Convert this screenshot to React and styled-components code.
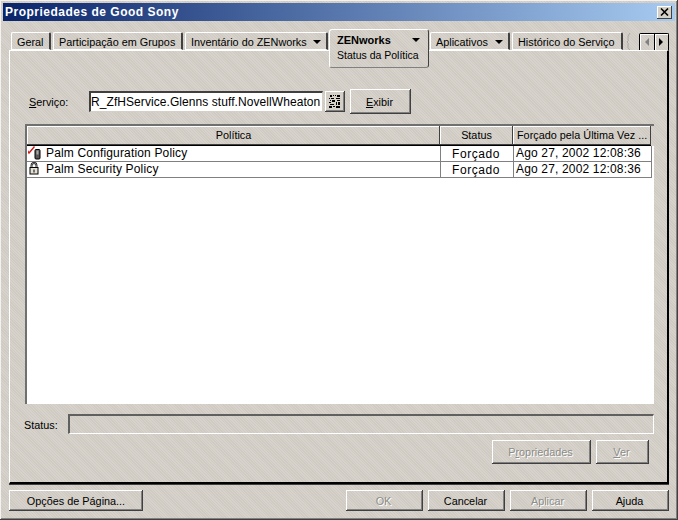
import React from "react";
import styled, { createGlobalStyle } from "styled-components";

const face = "#d4d0c8";
const dither = `
  repeating-linear-gradient(45deg, rgba(255,255,255,.07) 0 1px, rgba(0,0,0,.025) 1px 2px)
`;

const GlobalStyle = createGlobalStyle`
  html, body {
    margin: 0;
    padding: 0;
    background: ${face};
  }
  body {
    width: 678px;
    height: 520px;
    overflow: hidden;
    font-family: "Liberation Sans", Arial, sans-serif;
    font-size: 10.85px;
    color: #000;
  }
  u {
    text-underline-offset: 1px;
  }
`;

const Window = styled.div`
  box-sizing: border-box;
  width: 678px;
  height: 520px;
  padding: 3px;
  display: flex;
  flex-direction: column;
  background-color: ${face};
  background-image: ${dither};
  box-shadow: inset -1px -1px 0 #404040, inset 1px 1px 0 #f4f2ee,
    inset -2px -2px 0 #808080;
`;

const TitleBar = styled.div`
  height: 18px;
  flex: none;
  display: flex;
  align-items: center;
  justify-content: space-between;
  padding: 0 3px 0 2px;
  background: linear-gradient(90deg, #0a246a, #a6caf0);
  color: #fff;
  font-weight: bold;
  font-size: 12px;
  letter-spacing: 0.5px;
`;

const CloseButton = styled.div`
  box-sizing: border-box;
  width: 15px;
  height: 13px;
  display: flex;
  align-items: center;
  justify-content: center;
  background: ${face};
  box-shadow: inset -1px -1px 0 #404040, inset 1px 1px 0 #fff;
`;

const TabStrip = styled.div`
  height: 21px;
  margin-top: 8px;
  padding: 0 6px 0 8px;
  display: flex;
  align-items: flex-end;
  flex: none;
  position: relative;
  z-index: 2;
`;

const Tab = styled.div`
  box-sizing: border-box;
  height: 18px;
  width: ${(p) => p.$w}px;
  margin-right: ${(p) => p.$gap ?? 2}px;
  padding: 1px 0 0 5px;
  display: flex;
  align-items: center;
  justify-content: space-between;
  white-space: nowrap;
  border-top: 1px solid #fff;
  border-left: 1px solid #fff;
  border-right: 2px solid #404040;
  border-radius: 2px 2px 0 0;
  border-bottom: 1px solid #fff;
`;

const ActiveTab = styled.div`
  box-sizing: border-box;
  width: 100px;
  height: 39px;
  margin-bottom: -18px;
  margin-right: 1px;
  align-self: flex-end;
  padding: 3px 4px 0 7px;
  display: flex;
  flex-direction: column;
  gap: 2px;
  background-color: ${face};
  background-image: ${dither};
  border: 1px solid #fff;
  border-right-color: #404040;
  border-bottom-color: #808080;
  border-radius: 3px;
  position: relative;
`;

const ActiveHead = styled.div`
  display: flex;
  align-items: center;
  justify-content: space-between;
  padding-right: 4px;
  font-weight: bold;
  font-size: 11px;
  height: 14px;
`;

const ActiveItem = styled.span`
  font-size: 10.5px;
  white-space: nowrap;
`;

const Caret = styled.span`
  width: 0;
  height: 0;
  margin-right: ${(p) => p.$mr ?? 5}px;
  border-left: 4px solid transparent;
  border-right: 4px solid transparent;
  border-top: 4px solid #000;
`;

const TabStub = styled.svg`
  width: 9px;
  height: 17px;
  margin: 0 5px 0 1px;
  flex: none;
`;

const Scroller = styled.div`
  box-sizing: border-box;
  width: 30px;
  height: 17px;
  display: flex;
  border: 1px solid #000;
  border-bottom: none;
  border-radius: 2px 2px 0 0;
`;

const ScrollButton = styled.div`
  flex: 1;
  display: flex;
  align-items: center;
  justify-content: center;
  box-shadow: inset 1px 1px 0 #fff;
  & + & {
    border-left: 1px solid #000;
  }
  i {
    width: 0;
    height: 0;
    border-top: 4px solid transparent;
    border-bottom: 4px solid transparent;
    ${(p) =>
      p.$dir === "left"
        ? `border-right: 4px solid ${p.$off ? "#808080" : "#000"};`
        : `border-left: 4px solid ${p.$off ? "#808080" : "#000"};`}
  }
`;

const Panel = styled.div`
  flex: 1;
  margin: 0 6px;
  padding: 38px 13px 0 14px;
  display: flex;
  flex-direction: column;
  min-height: 0;
  border-top: 1px solid #fff;
  border-left: 1px solid #fff;
  border-right: 2px solid #000;
  border-bottom: 2px solid #000;
  box-shadow: 0 1px 0 #404040;
`;

const ServiceRow = styled.div`
  display: flex;
  align-items: center;
  height: 25px;
  padding-left: 5px;
`;

const FieldLabel = styled.label`
  width: ${(p) => p.$w}px;
  padding-top: ${(p) => p.$pt ?? 0}px;
  flex: none;
`;

const ServiceInput = styled.div`
  box-sizing: border-box;
  width: 234px;
  height: 21px;
  padding: 1px 0 0 0;
  background: #fff;
  border-top: 2px solid #404040;
  border-left: 2px solid #404040;
  border-right: 1px solid #d4d0c8;
  border-bottom: 1px solid #d4d0c8;
  font-size: 12px;
  letter-spacing: 0.07px;
  line-height: 16px;
  white-space: nowrap;
`;

const IconButton = styled.div`
  box-sizing: border-box;
  width: 20px;
  height: 21px;
  margin: 0 5px 0 2px;
  display: flex;
  align-items: center;
  justify-content: center;
  background: ${face};
  box-shadow: inset -1px -1px 0 #404040, inset 1px 1px 0 #fff,
    inset -2px -2px 0 #808080;
`;

const Button = styled.div`
  box-sizing: border-box;
  width: ${(p) => p.$w}px;
  height: ${(p) => p.$h ?? 21}px;
  flex: none;
  padding-right: ${(p) => p.$pr ?? 2}px;
  display: flex;
  align-items: center;
  justify-content: center;
  white-space: nowrap;
  box-shadow: inset -1px -1px 0 #404040, inset 1px 1px 0 #fff,
    inset -2px -2px 0 #808080;
  color: ${(p) => (p.disabled ? "#8c8c88" : "#000")};
  text-shadow: ${(p) => (p.disabled ? "1px 1px 0 #fff" : "none")};
`;

const Table = styled.div`
  box-sizing: border-box;
  height: 280px;
  margin: 10px 0 0 1px;
  flex: none;
  display: flex;
  flex-direction: column;
  background: linear-gradient(#fff, #fff) no-repeat 0 20px / 100% 100%;
  border-top: 2px solid #707070;
  border-left: 2px solid #707070;
`;

const Columns = "413px 73px 138px";

const HeadRow = styled.div`
  display: grid;
  grid-template-columns: ${Columns};
  height: 19px;
  border-bottom: 1px solid #000;
  flex: none;
  width: 624px;
`;

const HeadCell = styled.div`
  display: flex;
  align-items: center;
  justify-content: ${(p) => (p.$left ? "flex-start" : "center")};
  padding-left: ${(p) => (p.$left ? 4 : 0)}px;
  white-space: nowrap;
  overflow: hidden;
  box-shadow: inset -1px -1px 0 #404040, inset 1px 1px 0 #fff;
  padding-bottom: 1px;
`;

const Row = styled.div`
  display: grid;
  grid-template-columns: ${Columns};
  height: 16px;
  width: 625px;
  flex: none;
  background: #fff;
  border-bottom: 1px solid #808080;
  border-right: 1px solid #808080;
  box-sizing: border-box;
  font-size: 12px;
  letter-spacing: 0.16px;
`;

const Cell = styled.div`
  display: flex;
  align-items: center;
  justify-content: ${(p) => (p.$center ? "center" : "flex-start")};
  padding-left: ${(p) => (p.$center ? 0 : p.$pl ?? 1)}px;
  white-space: nowrap;
  overflow: hidden;
  box-sizing: border-box;
  & + & {
    border-left: 1px solid #808080;
  }
`;

const CellText = styled.span`
  margin-bottom: 2px;
`;

const StatusText = styled.span`
  letter-spacing: 0.55px;
  margin-right: 2px;
`;

const RowIcon = styled.svg`
  width: 18px;
  height: 15px;
  flex: none;
`;

const StatusRow = styled.div`
  display: flex;
  align-items: center;
  height: 20px;
  margin-top: 10px;
`;

const StatusBox = styled.div`
  box-sizing: border-box;
  flex: 1;
  height: 20px;
  border-top: 2px solid #606060;
  border-left: 2px solid #606060;
  border-right: 1px solid #fff;
  border-bottom: 1px solid #fff;
`;

const ActionRow = styled.div`
  display: flex;
  justify-content: flex-end;
  gap: 5px;
  margin-top: 6px;
  padding-right: 5px;
`;

const Footer = styled.div`
  display: flex;
  flex: none;
  align-items: flex-start;
  gap: 5px;
  height: 33px;
  padding: 6px 6px 0 6px;
  box-sizing: border-box;
`;

const Spacer = styled.div`
  flex: 1;
`;

const PalmIcon = () => (
  <RowIcon viewBox="0 0 18 15">
    <path d="M-0.5 4.5 L1 7 L6.5 0.5" fill="none" stroke="#d01818" strokeWidth="1.4" />
    <rect x="7" y="3.5" width="5" height="9.5" rx="1" fill="#585858" stroke="#000" />
    <rect x="8.5" y="4.5" width="2" height="4" fill="#a8a8a8" />
  </RowIcon>
);

const LockIcon = () => (
  <RowIcon viewBox="0 0 18 15">
    <path d="M3.5 6 V3.5 Q3.5 1 6 1 Q8.5 1 8.5 3.5 V6" fill="none" stroke="#000" strokeWidth="1.8" />
    <path d="M3.5 6 V3.5 Q3.5 1 6 1 Q8.5 1 8.5 3.5 V6" fill="none" stroke="#d8d8d8" strokeWidth="0.6" />
    <rect x="2" y="5.5" width="8" height="6.5" fill="#e4e0d4" stroke="#000" />
    <rect x="5.5" y="7.5" width="1" height="3" fill="#000" />
  </RowIcon>
);

const BrowseIcon = () => (
  <svg width="12" height="13" viewBox="0 0 12 13" shapeRendering="crispEdges">
    <g fill="#000">
      <rect x="1" y="0" width="2" height="2" />
      <rect x="4" y="0" width="1" height="1" />
      <rect x="6" y="0" width="1" height="1" />
      <rect x="8" y="0" width="3" height="2" />
      <rect x="0" y="3" width="1" height="1" />
      <rect x="2" y="3" width="3" height="1" />
      <rect x="7" y="3" width="4" height="1" />
      <rect x="1" y="5" width="1" height="1" />
      <rect x="3" y="5" width="3" height="2" />
      <rect x="8" y="5" width="3" height="1" />
      <rect x="0" y="7" width="2" height="1" />
      <rect x="7" y="7" width="1" height="3" />
      <rect x="9" y="7" width="2" height="3" />
      <rect x="1" y="9" width="4" height="1" />
      <rect x="0" y="11" width="3" height="2" />
      <rect x="4" y="11" width="2" height="1" />
      <rect x="7" y="11" width="4" height="2" />
    </g>
  </svg>
);

const rows = [
  { name: "Palm Configuration Policy", icon: <PalmIcon /> },
  { name: "Palm Security Policy", icon: <LockIcon /> },
];

export default function App() {
  return (
    <>
      <GlobalStyle />
      <Window>
        <TitleBar>
          <span>Propriedades de Good Sony</span>
          <CloseButton>
            <svg width="9" height="8" viewBox="0 0 9 8">
              <path d="M1 0.5 L8 7.5 M8 0.5 L1 7.5" stroke="#000" strokeWidth="1.6" />
            </svg>
          </CloseButton>
        </TitleBar>

        <TabStrip>
          <Tab $w={40}>Geral</Tab>
          <Tab $w={130}>Participação em Grupos</Tab>
          <Tab $w={143} $gap={1}>
            Inventário do ZENworks <Caret />
          </Tab>
          <ActiveTab>
            <ActiveHead>
              ZENworks <Caret $mr={0} />
            </ActiveHead>
            <ActiveItem>Status da Política</ActiveItem>
          </ActiveTab>
          <Tab $w={80} $gap={2}>
            Aplicativos <Caret />
          </Tab>
          <Tab $w={111} $gap={1}>Histórico do Serviço</Tab>
          <TabStub viewBox="0 0 9 17">
            <path d="M5 0 Q2 3 3 6 Q4 8 2 9 Q4 10 3 12 Q2 15 5 17" fill="none" stroke="#a8a8a0" />
          </TabStub>
          <Scroller>
            <ScrollButton $dir="left" $off>
              <i />
            </ScrollButton>
            <ScrollButton $dir="right">
              <i />
            </ScrollButton>
          </Scroller>
        </TabStrip>

        <Panel>
          <ServiceRow>
            <FieldLabel $w={60}>
              <u>S</u>erviço:
            </FieldLabel>
            <ServiceInput>R_ZfHService.Glenns stuff.NovellWheaton</ServiceInput>
            <IconButton>
              <BrowseIcon />
            </IconButton>
            <Button $w={61} $h={25}>
              <span>
                <u>E</u>xibir
              </span>
            </Button>
          </ServiceRow>

          <Table>
            <HeadRow>
              <HeadCell>Política</HeadCell>
              <HeadCell>Status</HeadCell>
              <HeadCell $left>Forçado pela Última Vez ...</HeadCell>
            </HeadRow>
            {rows.map((row) => (
              <Row key={row.name}>
                <Cell>
                  {row.icon}
                  <CellText>{row.name}</CellText>
                </Cell>
                <Cell $center>
                  <StatusText>Forçado</StatusText>
                </Cell>
                <Cell $pl={2}>
                  <CellText>Ago 27, 2002 12:08:36</CellText>
                </Cell>
              </Row>
            ))}
          </Table>

          <StatusRow>
            <FieldLabel $w={44} $pt={2}>Status:</FieldLabel>
            <StatusBox />
          </StatusRow>

          <ActionRow>
            <Button $w={99} $h={24} disabled>
              <span>
                P<u>r</u>opriedades
              </span>
            </Button>
            <Button $w={53} $h={24} disabled>
              <span>
                <u>V</u>er
              </span>
            </Button>
          </ActionRow>
        </Panel>

        <Footer>
          <Button $w={134} $pr={0}>
            <span>
              Opções de Pá<u>g</u>ina...
            </span>
          </Button>
          <Spacer />
          <Button $w={77} disabled>OK</Button>
          <Button $w={77}>Cancelar</Button>
          <Button $w={77} disabled>Aplicar</Button>
          <Button $w={77}>
            <span>
              A<u>j</u>uda
            </span>
          </Button>
        </Footer>
      </Window>
    </>
  );
}
